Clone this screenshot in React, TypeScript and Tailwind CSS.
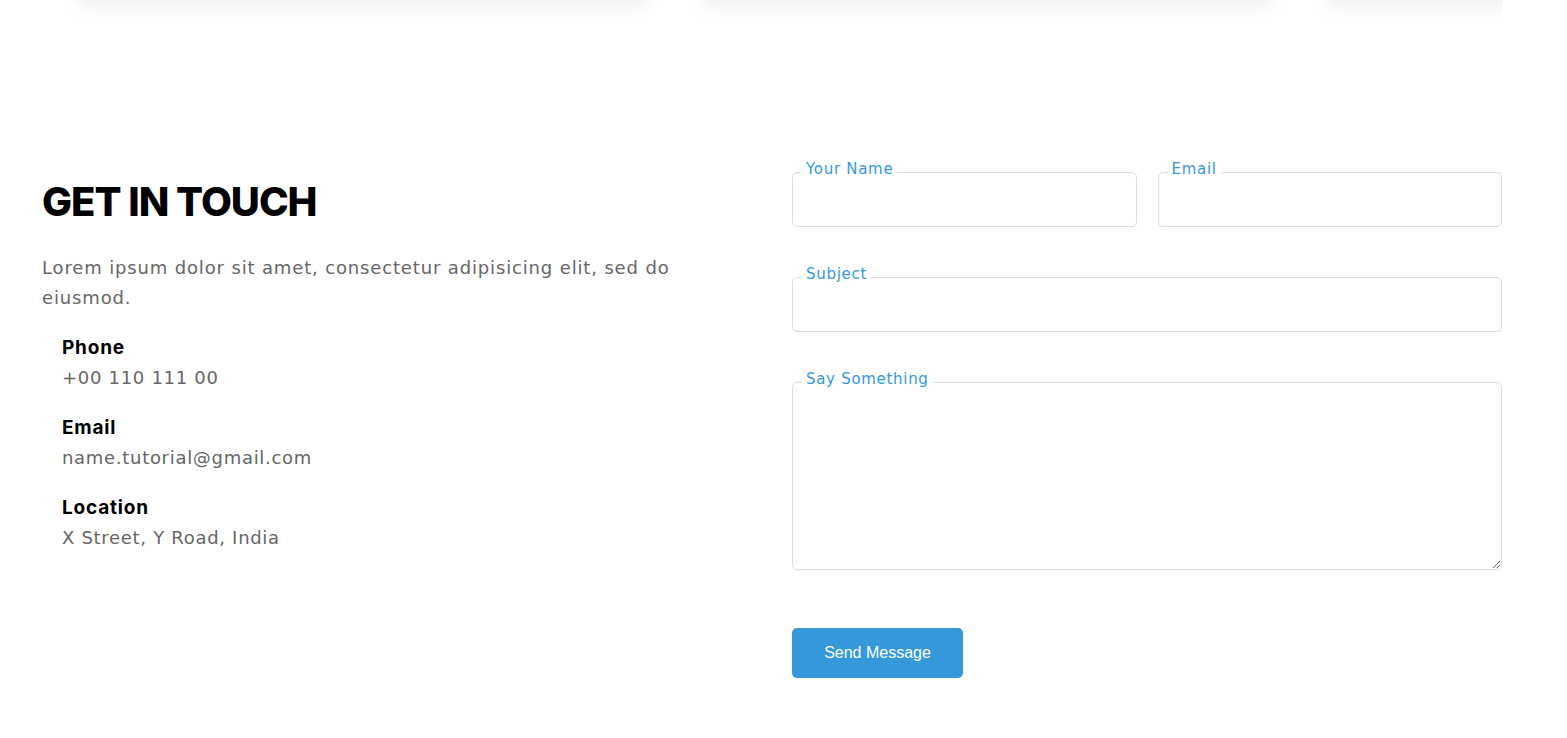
import React from "react";

const fieldBase =
  "w-full rounded-[5px] border border-[#dddddd] bg-white px-[14px] text-[16px] text-[#333] outline-none focus:border-[#3498db]";

function Field({
  label,
  children,
}: {
  label: string;
  children: React.ReactNode;
}) {
  return (
    <div className="relative">
      <label className="absolute left-[10px] top-[-13px] bg-white px-[4px] font-['DejaVu_Sans',sans-serif] text-[15px] leading-[20px] tracking-[0.7px] text-[#3498db]">
        {label}
      </label>
      {children}
    </div>
  );
}

const contacts = [
  { title: "Phone", value: "+00 110 111 00" },
  { title: "Email", value: "name.tutorial@gmail.com" },
  { title: "Location", value: "X Street, Y Road, India" },
];

export default function App() {
  return (
    <div className="min-h-screen bg-white font-['Inter',sans-serif]">
      {/* tail end of the cards section above */}
      <div className="ml-[42px] h-[40px] w-[1460px] overflow-hidden">
        <div className="-mt-[100px] flex gap-[55px] pl-[35px]">
          <div className="h-[100px] w-[570px] shrink-0 rounded-[10px] bg-white shadow-[0_6px_20px_rgba(0,0,0,0.07)]" />
          <div className="h-[100px] w-[570px] shrink-0 rounded-[10px] bg-white shadow-[0_6px_20px_rgba(0,0,0,0.07)]" />
          <div className="h-[100px] w-[570px] shrink-0 rounded-[10px] bg-white shadow-[0_6px_20px_rgba(0,0,0,0.07)]" />
        </div>
      </div>

      {/* contact section */}
      <section className="ml-[42px] mt-[121px] grid w-[1460px] grid-cols-2 gap-10">
        <div className="pt-[16px]">
          <h2 className="text-[40px] font-extrabold leading-[50px] tracking-[-1px] text-black">
            GET IN TOUCH
          </h2>
          <p className="mt-[26px] w-[680px] font-['DejaVu_Sans',sans-serif] text-[18px] leading-[30px] tracking-[0.85px] text-[#666666]">
            Lorem ipsum dolor sit amet, consectetur adipisicing elit, sed do
            eiusmod.
          </p>
          <div className="mt-[20px] flex flex-col gap-[20px] pl-[20px]">
            {contacts.map((c) => (
              <div key={c.title}>
                <h4 className="text-[19px] font-bold leading-[30px] tracking-[0.8px] text-black">
                  {c.title}
                </h4>
                <p className="font-['DejaVu_Sans',sans-serif] text-[18px] leading-[30px] tracking-[0.7px] text-[#666666]">
                  {c.value}
                </p>
              </div>
            ))}
          </div>
        </div>

        <form className="mt-[11px] flex flex-col" onSubmit={(e) => e.preventDefault()}>
          <div className="grid grid-cols-2 gap-[21px]">
            <Field label="Your Name">
              <input type="text" className={`${fieldBase} h-[55px]`} />
            </Field>
            <Field label="Email">
              <input type="email" className={`${fieldBase} h-[55px]`} />
            </Field>
          </div>
          <div className="mt-[50px]">
            <Field label="Subject">
              <input type="text" className={`${fieldBase} h-[55px]`} />
            </Field>
          </div>
          <div className="mt-[50px]">
            <Field label="Say Something">
              <textarea className={`${fieldBase} block h-[188px] py-[12px]`} />
            </Field>
          </div>
          <div className="mt-[58px]">
            <button
              type="submit"
              className="h-[50px] w-[171px] rounded-[5px] bg-[#3498db] font-['Liberation_Sans',Arial,sans-serif] text-[16px] text-white"
            >
              Send Message
            </button>
          </div>
        </form>
      </section>
    </div>
  );
}
